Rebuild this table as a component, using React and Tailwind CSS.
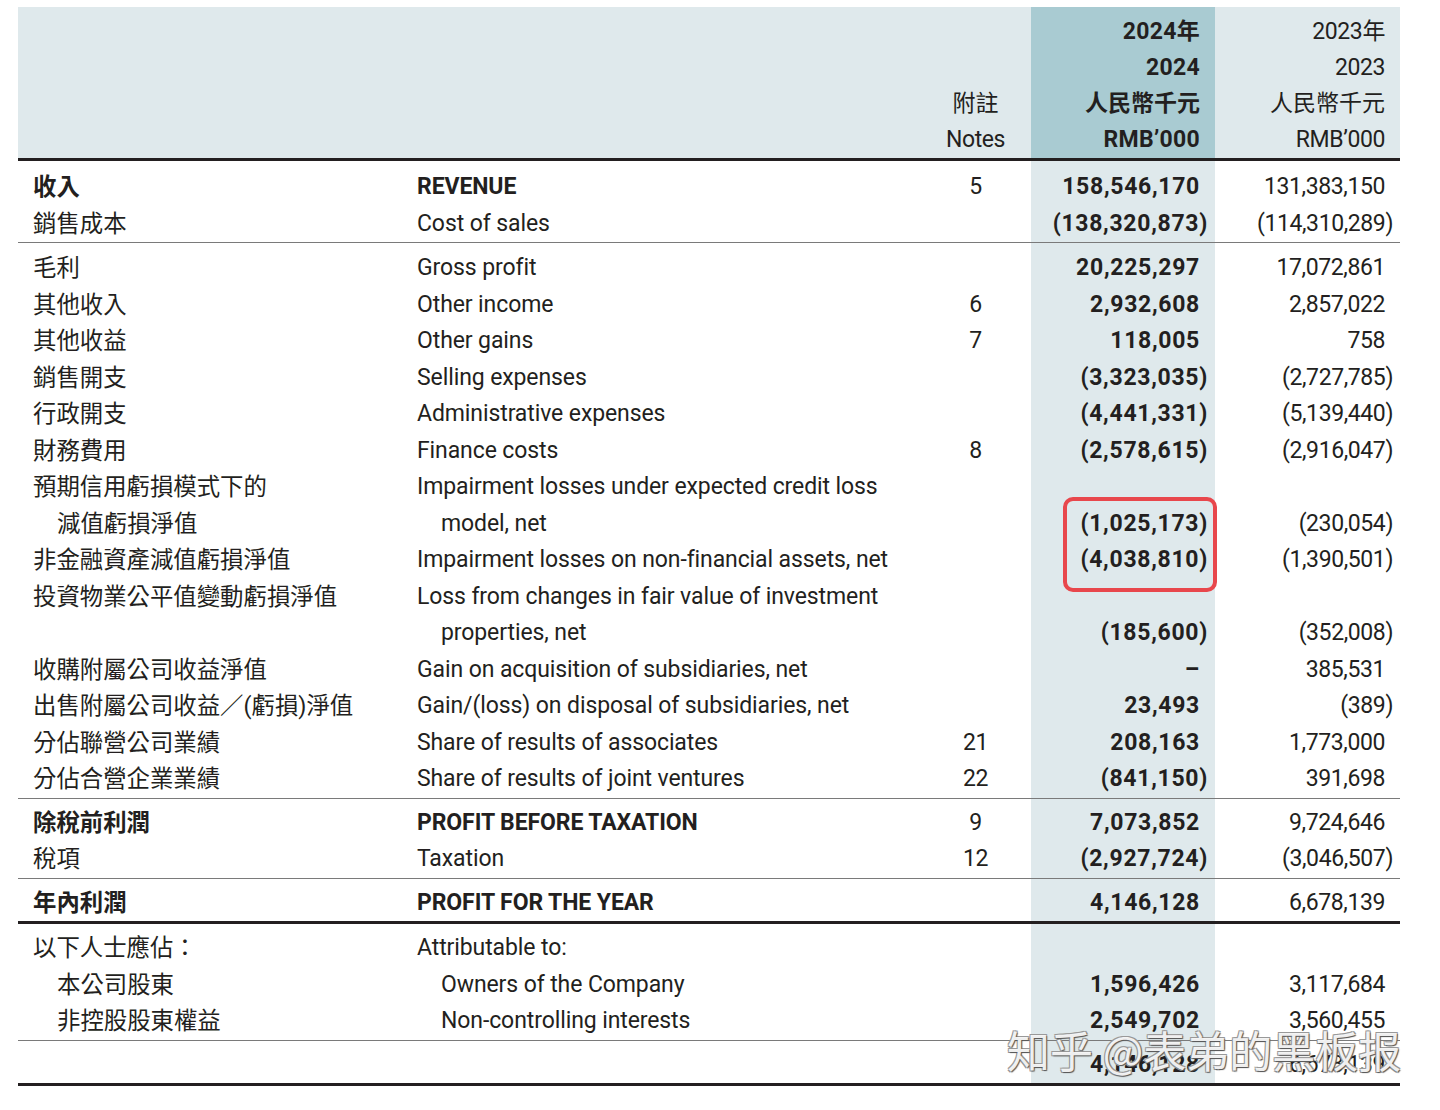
import React from "react";

const FONT = "font-['Roboto','Noto_Sans_CJK_TC',sans-serif]";

function Num({ v, bold }) {
  if (v === undefined || v === null || v === "") return null;
  const neg = v.startsWith("(");
  return (
    <span className={`${bold ? "font-bold" : "font-normal"} ${neg ? "-mr-[8px]" : ""} inline-block`}>{v}</span>
  );
}

function Row({ zh, en, note, a, b, bold, indentZh, indentEn }) {
  const cell = "h-[36.5px] leading-[36.5px] whitespace-nowrap";
  return (
    <>
      <div className={`${cell} text-[23.4px] ${bold ? "font-bold" : ""} ${indentZh ? "pl-[39px]" : "pl-[15px]"}`}>{zh}</div>
      <div className={`${cell} text-[23px] tracking-[-0.1px] ${bold ? "font-bold" : ""} ${indentEn ? "pl-[24px]" : ""}`}>{en}</div>
      <div className={`${cell} text-center text-[23px] tracking-[-0.4px]`}>{note}</div>
      <div className={`${cell} bg-[#dfe9ec] text-right pr-[15px] text-[23px] tracking-[0.7px]`}><Num v={a} bold /></div>
      <div className={`${cell} text-right pr-[15px] text-[23px] tracking-[-0.4px]`}><Num v={b} /></div>
    </>
  );
}

const SP = {
  6: "h-[6px]",
  7: "h-[7px]",
  8: "h-[8px]",
};

function Spacer({ h }) {
  const c = SP[h];
  return (
    <>
      <div className={c} />
      <div className={c} />
      <div className={c} />
      <div className={`${c} bg-[#dfe9ec]`} />
      <div className={c} />
    </>
  );
}

const GRID = "grid grid-cols-[399px_503px_111px_184px_185px]";

function Section({ rows, border, sp }) {
  return (
    <div className={`${GRID} ${border}`}>
      <Spacer h={sp} />
      {rows.map((r, i) => (
        <Row key={i} {...r} />
      ))}
    </div>
  );
}

const s1 = [
  { zh: "收入", en: "REVENUE", note: "5", a: "158,546,170", b: "131,383,150", bold: true },
  { zh: "銷售成本", en: "Cost of sales", a: "(138,320,873)", b: "(114,310,289)" },
];
const s2 = [
  { zh: "毛利", en: "Gross profit", a: "20,225,297", b: "17,072,861" },
  { zh: "其他收入", en: "Other income", note: "6", a: "2,932,608", b: "2,857,022" },
  { zh: "其他收益", en: "Other gains", note: "7", a: "118,005", b: "758" },
  { zh: "銷售開支", en: "Selling expenses", a: "(3,323,035)", b: "(2,727,785)" },
  { zh: "行政開支", en: "Administrative expenses", a: "(4,441,331)", b: "(5,139,440)" },
  { zh: "財務費用", en: "Finance costs", note: "8", a: "(2,578,615)", b: "(2,916,047)" },
  { zh: "預期信用虧損模式下的", en: "Impairment losses under expected credit loss" },
  { zh: "減值虧損淨值", en: "model, net", a: "(1,025,173)", b: "(230,054)", indentZh: true, indentEn: true },
  { zh: "非金融資產減值虧損淨值", en: "Impairment losses on non-financial assets, net", a: "(4,038,810)", b: "(1,390,501)" },
  { zh: "投資物業公平值變動虧損淨值", en: "Loss from changes in fair value of investment" },
  { zh: "", en: "properties, net", a: "(185,600)", b: "(352,008)", indentEn: true },
  { zh: "收購附屬公司收益淨值", en: "Gain on acquisition of subsidiaries, net", a: "–", b: "385,531" },
  { zh: "出售附屬公司收益／(虧損)淨值", en: "Gain/(loss) on disposal of subsidiaries, net", a: "23,493", b: "(389)" },
  { zh: "分佔聯營公司業績", en: "Share of results of associates", note: "21", a: "208,163", b: "1,773,000" },
  { zh: "分佔合營企業業績", en: "Share of results of joint ventures", note: "22", a: "(841,150)", b: "391,698" },
];
const s3 = [
  { zh: "除稅前利潤", en: "PROFIT BEFORE TAXATION", note: "9", a: "7,073,852", b: "9,724,646", bold: true },
  { zh: "稅項", en: "Taxation", note: "12", a: "(2,927,724)", b: "(3,046,507)" },
];
const s4 = [
  { zh: "年內利潤", en: "PROFIT FOR THE YEAR", a: "4,146,128", b: "6,678,139", bold: true },
];
const s5 = [
  { zh: "以下人士應佔：", en: "Attributable to:" },
  { zh: "本公司股東", en: "Owners of the Company", a: "1,596,426", b: "3,117,684", indentZh: true, indentEn: true },
  { zh: "非控股股東權益", en: "Non-controlling interests", a: "2,549,702", b: "3,560,455", indentZh: true, indentEn: true },
];
const s6 = [{ zh: "", en: "", a: "4,146,128", b: "6,678,139" }];

export default function App() {
  const hc = "h-[36px] leading-[36px] whitespace-nowrap text-[23px]";
  return (
    <div className={`relative w-[1440px] h-[1110px] bg-white text-[#231f20] ${FONT}`}>
      <div className="pt-[7px] pl-[18px]">
        <div className="w-[1382px]">
          {/* header */}
          <div className={`${GRID} bg-[#dfe9ec]`}>
            <div className="pt-[7px]" />
            <div className="pt-[7px]" />
            <div className="pt-[7px] flex flex-col items-center">
              <div className={hc} />
              <div className={hc} />
              <div className={`${hc} text-[23.4px]`}>附註</div>
              <div className={`${hc} tracking-[-0.4px]`}>Notes</div>
            </div>
            <div className="pt-[7px] bg-[#a9cbd2] flex flex-col items-end pr-[15px] font-bold">
              <div className={`${hc} tracking-[0.3px]`}>2024年</div>
              <div className={`${hc} tracking-[0.3px]`}>2024</div>
              <div className={`${hc} text-[23.4px]`}>人民幣千元</div>
              <div className={`${hc} tracking-[0.3px]`}>RMB’000</div>
            </div>
            <div className="pt-[7px] flex flex-col items-end pr-[15px]">
              <div className={`${hc} tracking-[-0.4px]`}>2023年</div>
              <div className={`${hc} tracking-[-0.4px]`}>2023</div>
              <div className={`${hc} text-[23.4px]`}>人民幣千元</div>
              <div className={`${hc} tracking-[-0.4px]`}>RMB’000</div>
            </div>
          </div>
          <Section rows={s1} sp={8} border="border-t-[3px] border-[#231f20]" />
          <Section rows={s2} sp={7} border="border-t-[1.5px] border-[#7a7a7a]" />
          <Section rows={s3} sp={6} border="border-t-[1.5px] border-[#7a7a7a]" />
          <Section rows={s4} sp={6} border="border-t-[1.5px] border-[#7a7a7a]" />
          <Section rows={s5} sp={6} border="border-t-[3px] border-[#231f20]" />
          <Section rows={s6} sp={6} border="border-t-[1.5px] border-[#7a7a7a]" />
          <div className="border-t-[3px] border-[#231f20]" />
        </div>
      </div>

      {/* highlight box */}
      <div className="absolute left-[1063px] top-[497px] w-[154px] h-[95px] border-[4px] border-[#e8474c] rounded-[10px]" />

      {/* watermark */}
      <div className="absolute left-[1007px] top-[1021px] text-[43px] leading-[56px] whitespace-nowrap text-white/90 font-['Noto_Sans_CJK_SC',sans-serif] [text-shadow:1px_1px_1px_#555,-1px_-1px_0_#999,1px_-1px_0_#999,-1px_1px_0_#999]">
        知乎 @表弟的黑板报
      </div>
    </div>
  );
}
